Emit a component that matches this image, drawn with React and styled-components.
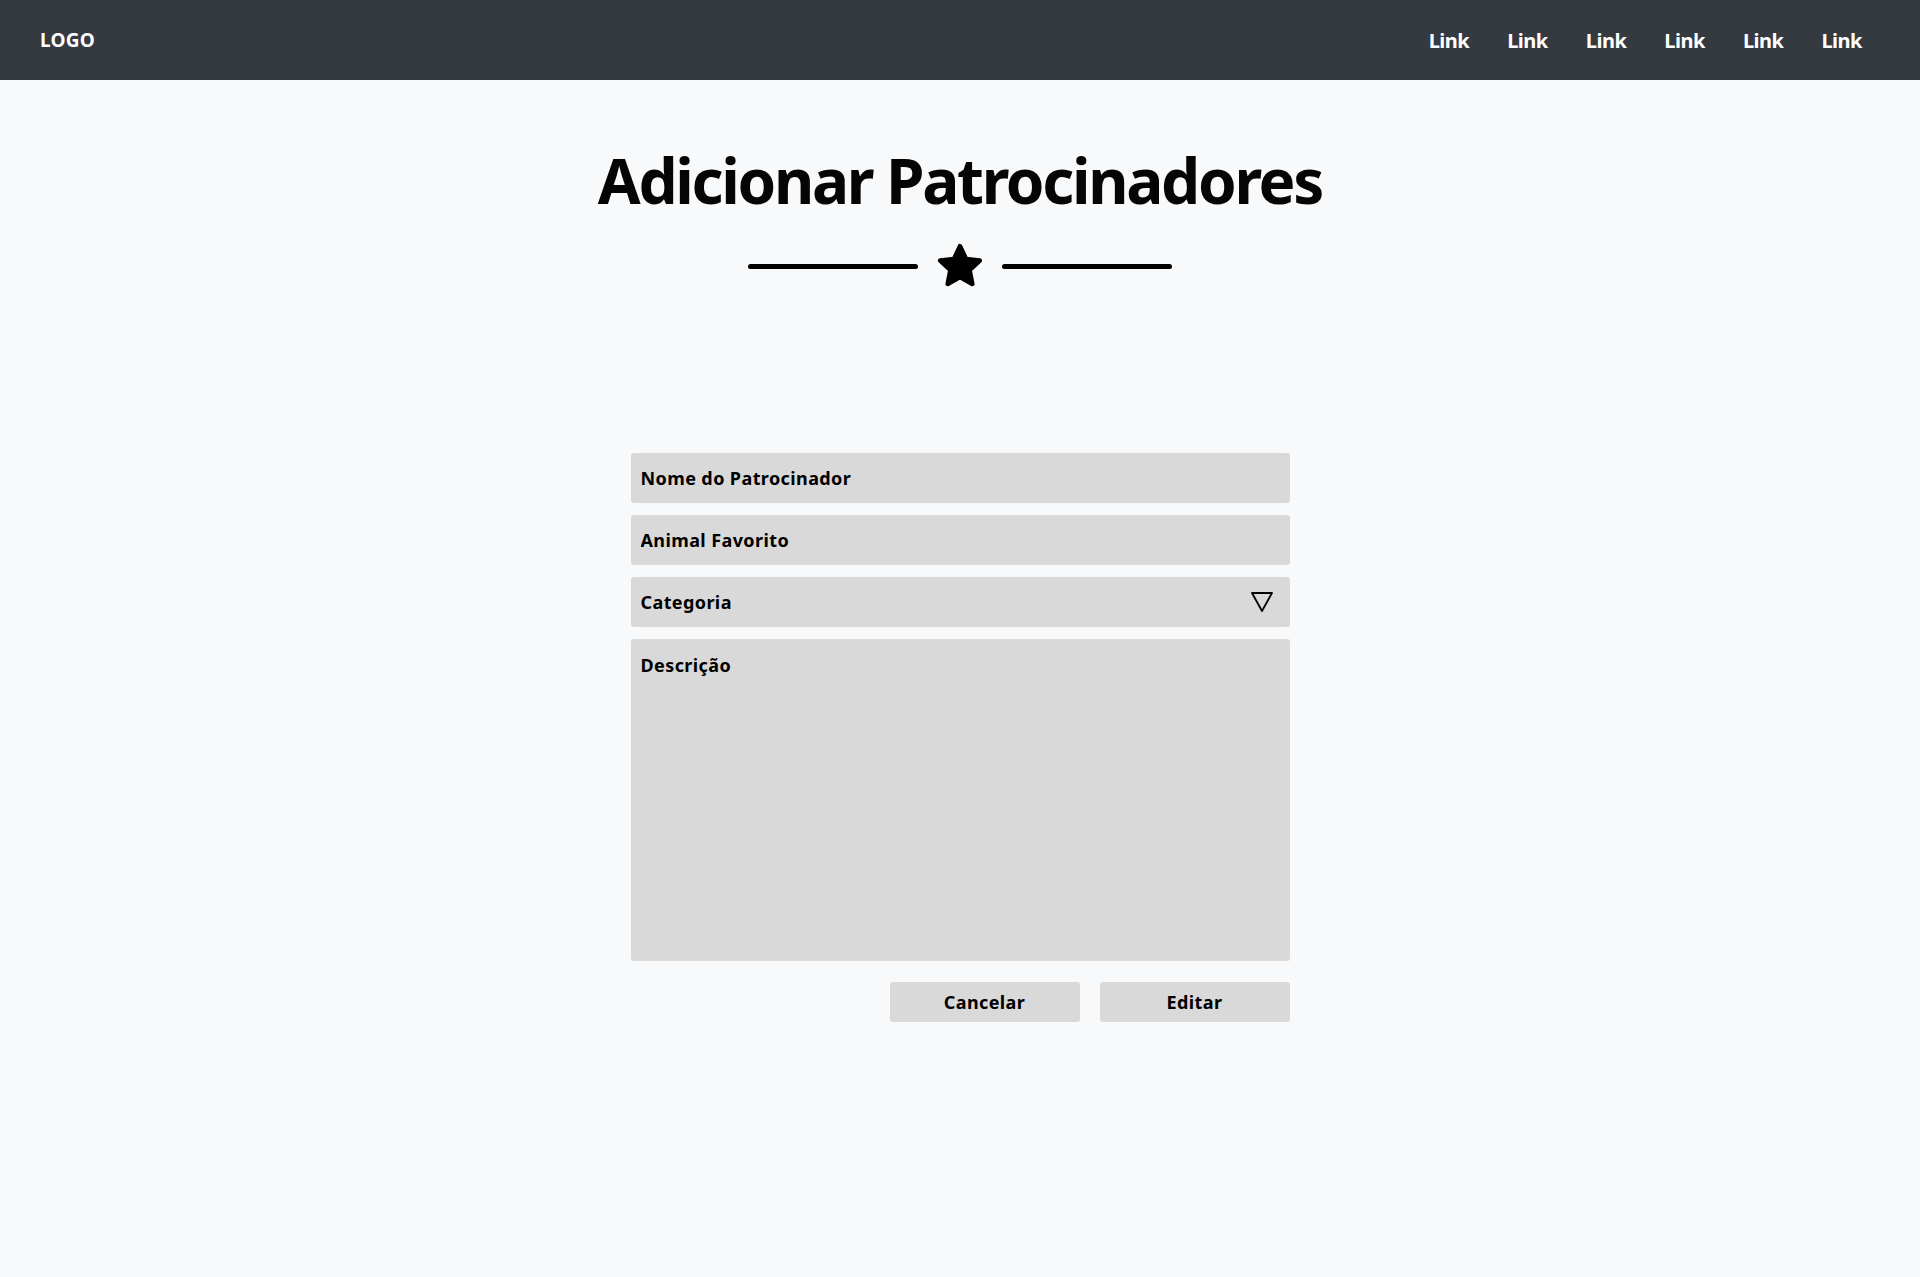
import React from 'react'
import styled, { createGlobalStyle } from 'styled-components';

const GlobalStyle = createGlobalStyle`
    * {
        box-sizing: border-box;
    }
    body {
        margin: 0;
        background: #f8f9fa;
        font-family: "Noto Sans", "Open Sans", sans-serif;
        color: #000;
    }
`;

const links = ['Link', 'Link', 'Link', 'Link', 'Link', 'Link'];

export default function App() {
    return (
        <>
            <GlobalStyle/>
            <NavBar>
                <Logo>LOGO</Logo>
                <NavLinks>
                    {links.map((text, i) => (
                        <NavLink key={i} href="#">{text}</NavLink>
                    ))}
                </NavLinks>
            </NavBar>
            <Main>
                <Title>Adicionar Patrocinadores</Title>
                <Divider>
                    <Line/>
                    <Star/>
                    <Line/>
                </Divider>
                <Form onSubmit={e => e.preventDefault()}>
                    <Field placeholder="Nome do Patrocinador"/>
                    <Field placeholder="Animal Favorito"/>
                    <SelectBox>
                        <span>Categoria</span>
                        <Arrow/>
                    </SelectBox>
                    <TextArea placeholder="Descrição"/>
                    <Actions>
                        <Button type="button">Cancelar</Button>
                        <Button type="submit">Editar</Button>
                    </Actions>
                </Form>
            </Main>
        </>
    );
}

function Star() {
    return (
        <StarSvg viewBox="0 0 24 24">
            <path
                d="M12 2.5l2.9 6.1 6.6.8-4.9 4.6 1.3 6.6L12 17.3l-5.9 3.3 1.3-6.6-4.9-4.6 6.6-.8z"
                fill="#000"
                stroke="#000"
                strokeWidth="2.2"
                strokeLinejoin="round"
            />
        </StarSvg>
    );
}

function Arrow() {
    return (
        <ArrowSvg viewBox="0 0 24 22">
            <path d="M2 2h20L12 20z" fill="none" stroke="#000" strokeWidth="1.8" strokeLinejoin="round"/>
        </ArrowSvg>
    );
}

const NavBar = styled.header`
    display: flex;
    align-items: center;
    justify-content: space-between;
    height: 80px;
    padding: 0 58px 0 40px;
    background: #343a40;
`;

const Logo = styled.div`
    color: #fff;
    font-weight: 700;
    font-size: 19px;
    letter-spacing: 0.2px;
`;

const NavLinks = styled.nav`
    display: flex;
    gap: 38px;
`;

const NavLink = styled.a`
    color: #fff;
    font-weight: 700;
    font-size: 20px;
    text-decoration: none;
    letter-spacing: -0.5px;
`;

const Main = styled.main`
    display: flex;
    flex-direction: column;
    align-items: center;
    padding-top: 62px;
`;

const Title = styled.h1`
    margin: 0;
    font-size: 62px;
    font-weight: 700;
    line-height: 76px;
    letter-spacing: -2.3px;
    color: #050505;
`;

const Divider = styled.div`
    display: flex;
    align-items: center;
    gap: 17px;
    margin-top: 23px;
`;

const Line = styled.span`
    display: block;
    width: 170px;
    height: 5px;
    border-radius: 3px;
    background: #000;
`;

const StarSvg = styled.svg`
    width: 50px;
    height: 50px;
`;

const Form = styled.form`
    display: flex;
    flex-direction: column;
    gap: 12px;
    width: 659px;
    margin-top: 162px;
`;

const fieldText = `
    font-family: "Noto Sans", "Open Sans", sans-serif;
    font-size: 18px;
    font-weight: 700;
    letter-spacing: 0.4px;
    color: #000;
`;

const Field = styled.input`
    ${fieldText}
    height: 50px;
    padding: 0 10px;
    border: none;
    border-radius: 3px;
    background: #d9d9d9;
    outline: none;
    &::placeholder {
        color: #000;
        opacity: 1;
    }
`;

const SelectBox = styled.div`
    ${fieldText}
    display: flex;
    align-items: center;
    justify-content: space-between;
    height: 50px;
    padding: 0 16px 0 10px;
    border-radius: 3px;
    background: #d9d9d9;
`;

const ArrowSvg = styled.svg`
    width: 24px;
    height: 22px;
`;

const TextArea = styled.textarea`
    ${fieldText}
    height: 322px;
    padding: 14px 10px;
    border: none;
    border-radius: 3px;
    background: #d9d9d9;
    resize: none;
    outline: none;
    &::placeholder {
        color: #000;
        opacity: 1;
    }
`;

const Actions = styled.div`
    display: flex;
    justify-content: flex-end;
    gap: 20px;
    margin-top: 9px;
`;

const Button = styled.button`
    ${fieldText}
    width: 190px;
    height: 40px;
    border: none;
    border-radius: 3px;
    background: #d9d9d9;
    cursor: pointer;
`;
